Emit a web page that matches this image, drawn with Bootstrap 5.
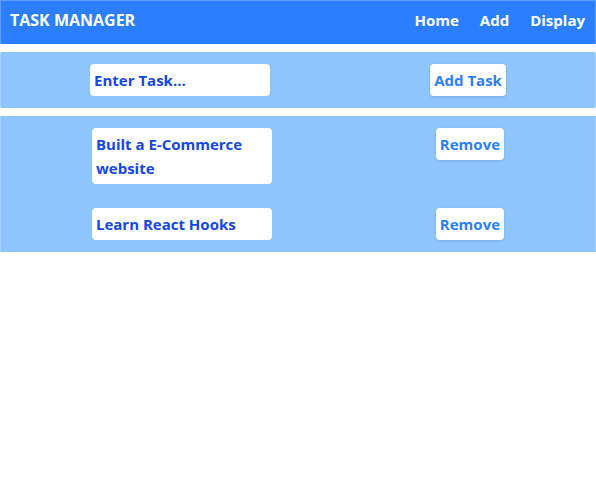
<!DOCTYPE html>
<html lang="en">
<head>
<meta charset="utf-8">
<meta name="viewport" content="width=device-width, initial-scale=1">
<title>Task Manager</title>
<link href="https://cdn.jsdelivr.net/npm/bootstrap@5.3.0/dist/css/bootstrap.min.css" rel="stylesheet">
<style>
body { font-family: "Open Sans", "Noto Sans", sans-serif; font-size: 15px; line-height: 24px; font-weight: 700; }
.topbar { background: #2b7fff; padding: 7px 10px 12px 9px; border: 1px solid #5c9cff; border-bottom-width: 0; }
.topbar a { color: #fff; text-decoration: none; }
.topbar .brand { font-size: 16px; }
.topnav { gap: 21px; }
.panel { background: #8ec5ff; border: solid #a5d1ff; border-width: 0 1px; }
.panel-form { border-radius: 2px; }
.task-line { padding: 12px 9px; }
.task-box { width: 180px; padding: 4px; border: 0; border-radius: 4px; background: #fff; color: #1447e6; line-height: 24px; font-weight: 700; }
.task-box::placeholder { color: #1447e6; opacity: 1; }
.task-btn { padding: 4px; border: 0; border-radius: 4px; background: #fff; color: #2b7fff; font-size: 15px; line-height: 24px; font-weight: 700; box-shadow: 0 1px 3px rgba(0, 0, 0, .12); }
</style>
<script src="https://cdn.jsdelivr.net/npm/bootstrap@5.3.0/dist/js/bootstrap.bundle.min.js"></script>
</head>
<body>
<header class="topbar d-flex justify-content-between">
  <a class="brand" href="#">TASK MANAGER</a>
  <nav class="topnav d-flex">
    <a href="#">Home</a>
    <a href="#add">Add</a>
    <a href="#display">Display</a>
  </nav>
</header>
<main>
  <form id="add" class="panel panel-form task-line d-flex justify-content-around align-items-start my-2">
    <input class="task-box" type="text" placeholder="Enter Task..." aria-label="Enter Task">
    <button class="task-btn btn" type="button">Add Task</button>
  </form>
  <ul id="display" class="panel list-unstyled mb-0">
    <li class="task-line d-flex justify-content-around align-items-start">
      <div class="task-box">Built a E-Commerce website</div>
      <button class="task-btn btn" type="button">Remove</button>
    </li>
    <li class="task-line d-flex justify-content-around align-items-start">
      <div class="task-box">Learn React Hooks</div>
      <button class="task-btn btn" type="button">Remove</button>
    </li>
  </ul>
</main>
</body>
</html>
